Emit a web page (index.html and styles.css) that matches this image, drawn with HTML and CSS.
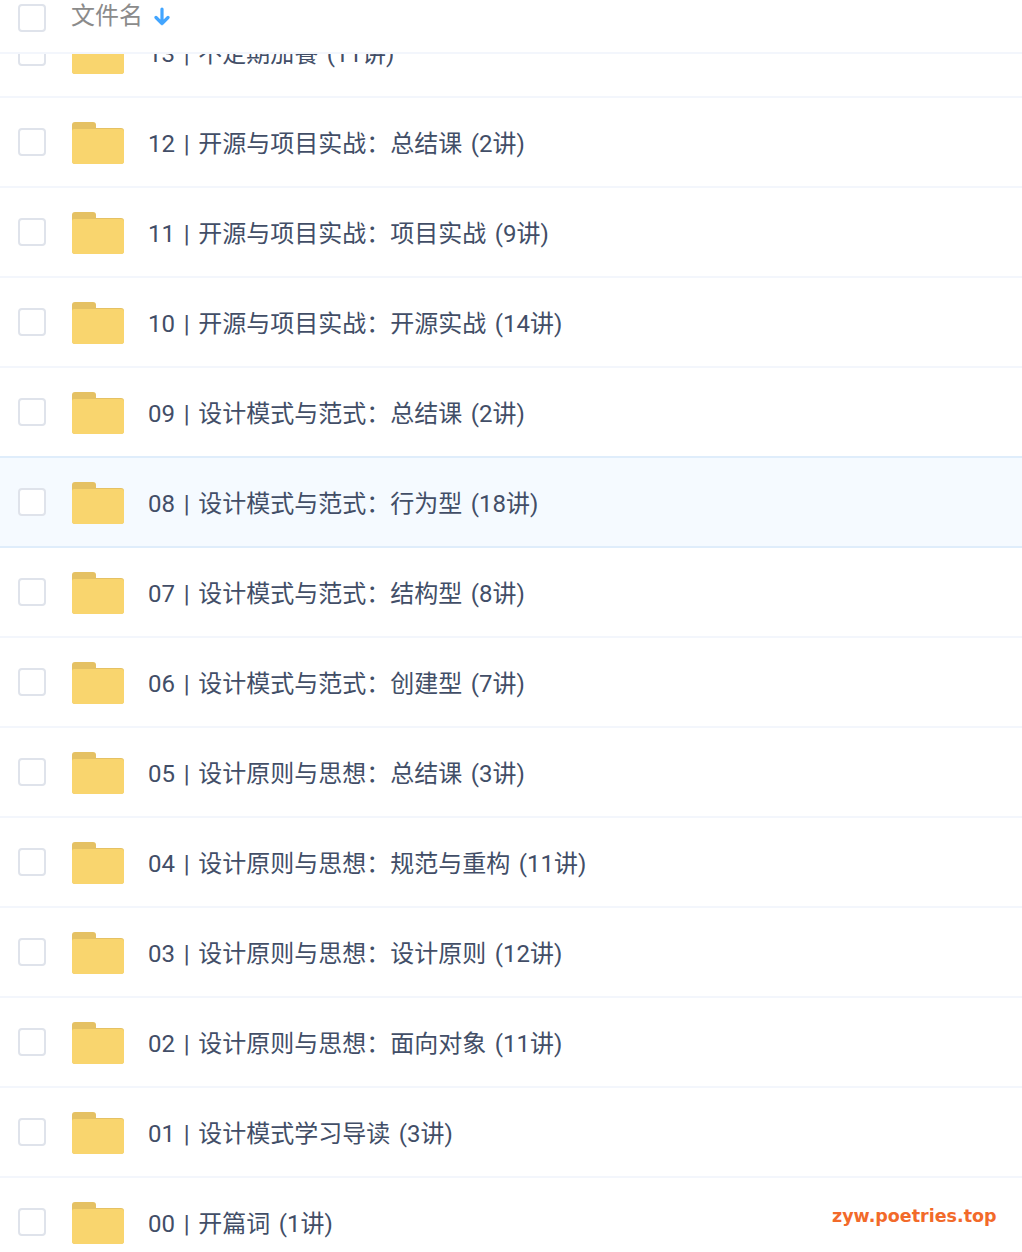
FILE: index.html
```html
<!DOCTYPE html>
<html lang="zh-CN">
  <head>
    <meta charset="UTF-8" />
    <meta name="viewport" content="width=device-width, initial-scale=1.0" />
    <title>文件名</title>
    <link rel="stylesheet" href="styles.css">
  </head>
  <body>
    <svg class="sprite" width="0" height="0">
      <symbol id="folder" viewBox="0 0 52 42">
        <path d="M0 3a3 3 0 0 1 3-3h18a3 3 0 0 1 3 3v5H0z" fill="#e5c163" />
        <path d="M0 8a2.500 2.500 0 0 1 2.500-2.500H22a3 3 0 0 1 2 .5h25a3 3 0 0 1 3 3v30a3 3 0 0 1-3 3H3a3 3 0 0 1-3-3z" fill="#e5c163" />
        <path d="M0 9a2 2 0 0 1 2-2h22q1 0 1 0h24a3 3 0 0 1 3 3v29a3 3 0 0 1-3 3H3a3 3 0 0 1-3-3z" fill="#f9d56e" />
      </symbol>
    </svg>

    <div class="page">
      <div class="header">
        <span class="checkbox"></span>
        <span class="header-name">文件名</span>
        <svg class="sort-icon" width="16" height="19" viewBox="0 0 16 19">
          <path d="M8 2v14.500M2 10.500l6 6 6-6" fill="none" stroke="#42a5ff" stroke-width="3.200" stroke-linecap="round" stroke-linejoin="round" />
        </svg>
      </div>

      <div class="list">
        <div class="row row-clipped">
          <span class="checkbox"></span>
          <svg class="folder"><use href="#folder" /></svg>
          <span class="name">13 | 不定期加餐 (11讲)</span>
        </div>
        <div class="row">
          <span class="checkbox"></span>
          <svg class="folder"><use href="#folder" /></svg>
          <span class="name">12 | 开源与项目实战：总结课 (2讲)</span>
        </div>
        <div class="row">
          <span class="checkbox"></span>
          <svg class="folder"><use href="#folder" /></svg>
          <span class="name">11 | 开源与项目实战：项目实战 (9讲)</span>
        </div>
        <div class="row">
          <span class="checkbox"></span>
          <svg class="folder"><use href="#folder" /></svg>
          <span class="name">10 | 开源与项目实战：开源实战 (14讲)</span>
        </div>
        <div class="row row-before-hover">
          <span class="checkbox"></span>
          <svg class="folder"><use href="#folder" /></svg>
          <span class="name">09 | 设计模式与范式：总结课 (2讲)</span>
        </div>
        <div class="row row-hover">
          <span class="checkbox"></span>
          <svg class="folder"><use href="#folder" /></svg>
          <span class="name">08 | 设计模式与范式：行为型 (18讲)</span>
        </div>
        <div class="row">
          <span class="checkbox"></span>
          <svg class="folder"><use href="#folder" /></svg>
          <span class="name">07 | 设计模式与范式：结构型 (8讲)</span>
        </div>
        <div class="row">
          <span class="checkbox"></span>
          <svg class="folder"><use href="#folder" /></svg>
          <span class="name">06 | 设计模式与范式：创建型 (7讲)</span>
        </div>
        <div class="row">
          <span class="checkbox"></span>
          <svg class="folder"><use href="#folder" /></svg>
          <span class="name">05 | 设计原则与思想：总结课 (3讲)</span>
        </div>
        <div class="row">
          <span class="checkbox"></span>
          <svg class="folder"><use href="#folder" /></svg>
          <span class="name">04 | 设计原则与思想：规范与重构 (11讲)</span>
        </div>
        <div class="row">
          <span class="checkbox"></span>
          <svg class="folder"><use href="#folder" /></svg>
          <span class="name">03 | 设计原则与思想：设计原则 (12讲)</span>
        </div>
        <div class="row">
          <span class="checkbox"></span>
          <svg class="folder"><use href="#folder" /></svg>
          <span class="name">02 | 设计原则与思想：面向对象 (11讲)</span>
        </div>
        <div class="row">
          <span class="checkbox"></span>
          <svg class="folder"><use href="#folder" /></svg>
          <span class="name">01 | 设计模式学习导读 (3讲)</span>
        </div>
        <div class="row">
          <span class="checkbox"></span>
          <svg class="folder"><use href="#folder" /></svg>
          <span class="name">00 | 开篇词 (1讲)</span>
        </div>
      </div>

      <div class="watermark">zyw.poetries.top</div>
    </div>
  </body>
</html>
```

FILE: styles.css
```css
html,
body {
  margin: 0;
  padding: 0;
  background: white;
}
body {
  font-family: Roboto, "Noto Sans CJK SC", sans-serif;
  color: #424e67;
}
.sprite {
  display: block;
}
.page {
  position: relative;
  height: 1252px;
  overflow: hidden;
}
.header {
  height: 54px;
  box-sizing: border-box;
  padding: 4px 0 0 18px;
  border-bottom: 2px solid #f3f6fc;
  display: flex;
  align-items: flex-start;
}
.header-name {
  margin-left: 25px;
  font-size: 24px;
  line-height: 24px;
  color: #8b8b8b;
}
.sort-icon {
  margin: 3px 0 0 11px;
}
.checkbox {
  width: 28px;
  height: 28px;
  flex: none;
  box-sizing: border-box;
  border: 2px solid #dfe3eb;
  border-radius: 4px;
  background: white;
}
.list {
  overflow: hidden;
}
.row {
  height: 90px;
  box-sizing: border-box;
  padding-left: 18px;
  border-bottom: 2px solid #f3f6fc;
  display: flex;
  align-items: center;
}
.row-clipped {
  margin-top: -46px;
}
.row-before-hover {
  border-bottom-color: #dfedfb;
}
.row-hover {
  background: #f5faff;
  border-bottom-color: #dfedfb;
}
.folder {
  width: 52px;
  height: 42px;
  margin: 2px 0 0 26px;
  flex: none;
}
.name {
  margin: 4px 0 0 24px;
  font-size: 24px;
  line-height: 32px;
  word-spacing: 2.7px;
}
.watermark {
  position: absolute;
  left: 832px;
  top: 1204px;
  font-family: "DejaVu Sans", sans-serif;
  font-size: 17.5px;
  line-height: 24px;
  font-weight: bold;
  color: #f26a2a;
}
```
